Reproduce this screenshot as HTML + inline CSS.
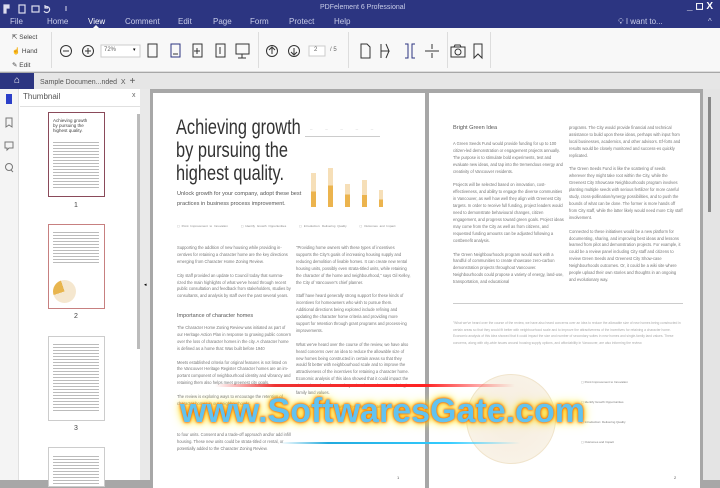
<!DOCTYPE html>
<html><head><meta charset="utf-8"><style>
*{margin:0;padding:0;box-sizing:border-box}
body{width:720px;height:480px;overflow:hidden;font-family:"Liberation Sans",sans-serif;background:#a7a7a7;position:relative}
.a{position:absolute}
.hdr{left:0;top:0;width:720px;height:28px;background:#2c3581;color:#c9cde8}
.menu span{position:absolute;top:17px;font-size:8px}
.tb{left:0;top:28px;width:720px;height:44px;background:#f8f8f8;border-bottom:1px solid #ddd}
.sep{position:absolute;top:4px;width:1px;height:36px;background:#ddd}
.p{font-size:4.1px;line-height:6.9px;color:#777;position:absolute}
</style></head><body>
<div class="a hdr">
 <svg class="a" style="left:2px;top:3px" width="80" height="12" viewBox="0 0 80 12" fill="none" stroke="#dde" stroke-width="1.2">
  <path d="M2 2h5v3H4v5H2z" fill="#dde"/><rect x="17" y="2" width="6" height="8"/><rect x="30" y="3" width="7" height="6"/><path d="M43 4a3 3 0 1 1-1 4M43 2v3h3"/><path d="M64 3v5" stroke-width="1"/>
 </svg>
 <div class="a" style="left:320px;top:4px;font-size:7px;color:#c9cde8">PDFelement 6 Professional</div>
 <div class="a" style="left:687px;top:1px;font-size:10px;color:#fff;font-weight:bold">_ ◻ X</div>
 <div class="menu">
  <span style="left:10px">File</span><span style="left:47px">Home</span><span style="left:88px;color:#fff">View</span><span style="left:125px">Comment</span><span style="left:178px">Edit</span><span style="left:213px">Page</span><span style="left:250px">Form</span><span style="left:289px">Protect</span><span style="left:334px">Help</span>
  <span style="left:618px">💡︎ I want to...</span><span style="left:708px">^</span>
 </div>
 <div class="a" style="left:93px;top:25px;width:0;height:0;border-left:3px solid transparent;border-right:3px solid transparent;border-bottom:3px solid #f8f8f8"></div>
</div>
<div class="a tb">
 <div class="a" style="left:12px;top:3px;font-size:6.5px;color:#444;line-height:14px">
  <div>⇱ Select</div><div><span style="color:#2c3581">☝</span> Hand</div><div>✎ Edit</div></div>
 <div class="sep" style="left:51px"></div>
 <svg class="a" style="left:55px;top:12px" width="440" height="20" viewBox="55 12 440 20" fill="none" stroke="#333" stroke-width="1">
  <circle cx="66" cy="23" r="5.5"/><path d="M63 23h6"/>
  <circle cx="88" cy="23" r="5.5"/><path d="M85 23h6M88 20v6"/>
  <rect x="101" y="17" width="39" height="12" fill="#fff" stroke="#ccc"/>
  <rect x="148" y="16" width="9" height="13"/><rect x="171" y="16" width="9" height="13" stroke="#2c3581"/><rect x="193" y="16" width="9" height="13"/><rect x="216" y="16" width="9" height="13"/>
  <path d="M173 26h5M197 20v6M194 23h6M220 19v7"/>
  <rect x="236" y="16" width="13" height="10"/><path d="M242 26v4M238 30h8"/>
  <circle cx="272" cy="23" r="5.5"/><path d="M272 26v-6M269 22l3-3 3 3"/>
  <circle cx="294" cy="23" r="5.5"/><path d="M294 20v6M291 24l3 3 3-3"/>
  <rect x="309" y="18" width="16" height="10" fill="#fff" stroke="#ccc"/>
  <path d="M361 16h6l3 3v11h-9z"/><path d="M381 16v14M381 23h8l-3-7M386 30l3-7" />
  <path d="M405 16h3v14h-3M415 16h-3v14h3" stroke="#2c3581"/><path d="M425 23h14M432 16v5M432 25v5"/>
  <rect x="451" y="19" width="14" height="10"/><circle cx="458" cy="24" r="3"/><path d="M454 19l1-2h5l1 2"/>
  <path d="M474 16h8v14l-4-4-4 4z"/>
 </svg>
 <div class="a" style="left:104px;top:19px;font-size:6px;color:#666">72%</div><div class="a" style="left:133px;top:19px;font-size:5px">▾</div>
 <div class="a" style="left:314px;top:19px;font-size:6px;color:#666">2</div><div class="a" style="left:330px;top:19px;font-size:6px;color:#666">/ 5</div>
 <div class="sep" style="left:258px"></div><div class="sep" style="left:348px"></div><div class="sep" style="left:447px"></div><div class="sep" style="left:490px"></div>
</div>
<div class="a" style="left:0;top:73px;width:720px;height:16px;background:#e6e6e6"></div>
<div class="a" style="left:0;top:73px;width:34px;height:16px;background:#2c3581;color:#fff;font-size:10px;text-align:center;line-height:15px">⌂</div>
<div class="a" style="left:40px;top:76px;font-size:7px;color:#555">Sample Documen...nded&nbsp;&nbsp;X&nbsp;&nbsp;<span style="font-size:10px">+</span></div>
<div class="a" style="left:0;top:89px;width:150px;height:391px;background:#fff"></div>
<div class="a" style="left:0;top:89px;width:19px;height:391px;background:#f4f4f4;border-right:1px solid #e0e0e0"></div>
<div class="a" style="left:6px;top:94px;width:6px;height:10px;background:#2c3fc8"></div>
<svg class="a" style="left:3px;top:116px" width="12" height="60" fill="none" stroke="#777"><path d="M3 2h6v9l-3-2-3 2z"/><path d="M2 26h8v6H6l-2 2v-2H2z"/><circle cx="6" cy="51" r="3.5"/><path d="M8 54l2 2"/></svg>
<div class="a" style="left:23px;top:92px;font-size:8px;color:#555">Thumbnail</div>
<div class="a" style="left:132px;top:92px;font-size:7px;color:#666">x</div>
<div class="a" style="left:20px;top:106px;width:120px;height:1px;background:#e0e0e0"></div>
<div class="a" style="left:137px;top:114px;width:3px;height:235px;background:#bbb"></div>
<div class="a" style="left:140px;top:89px;width:10px;height:391px;background:#e9e9e9"></div>
<div class="a" style="left:144px;top:282px;font-size:5px">◂</div>
<div class="a" style="left:48px;top:112px;width:57px;height:85px;background:#fff;border:1px solid #8a4a5a"></div>
<div class="a" style="left:53px;top:118px;font-size:4.5px;line-height:5px;color:#444">Achieving growth<br>by pursuing the<br>highest quality.</div>
<div class="a" style="left:53px;top:140px;width:46px;height:50px;background:repeating-linear-gradient(#fff 0 2px,#bbb 2px 3px)"></div>
<div class="a" style="left:74px;top:202px;font-size:7px;color:#444">1</div>
<div class="a" style="left:48px;top:224px;width:57px;height:85px;background:#fff;border:1px solid #c78080"></div>
<div class="a" style="left:53px;top:230px;width:46px;height:35px;background:repeating-linear-gradient(#fff 0 2px,#bbb 2px 3px)"></div>
<div class="a" style="left:53px;top:280px;width:23px;height:23px;border-radius:50%;background:conic-gradient(#f5e7cf 0 70%,#e8b54e 70% 95%,#f5e7cf 95%)"></div>
<div class="a" style="left:74px;top:313px;font-size:7px;color:#444">2</div>
<div class="a" style="left:48px;top:336px;width:57px;height:85px;background:#fff;border:1px solid #ccc"></div>
<div class="a" style="left:53px;top:342px;width:46px;height:70px;background:repeating-linear-gradient(#fff 0 2px,#bbb 2px 3px)"></div>
<div class="a" style="left:74px;top:425px;font-size:7px;color:#444">3</div>
<div class="a" style="left:48px;top:447px;width:57px;height:40px;background:#fff;border:1px solid #ccc"></div>
<div class="a" style="left:53px;top:454px;width:46px;height:30px;background:repeating-linear-gradient(#fff 0 2px,#bbb 2px 3px)"></div>
<!-- pages -->
<div class="a" style="left:153px;top:93px;width:272px;height:395px;background:#fff"></div>
<div class="a" style="left:429px;top:93px;width:271px;height:395px;background:#fff"></div>
<div class="a" style="left:703px;top:89px;width:17px;height:391px;background:#e4e4e4"></div>
<div class="a" style="left:708px;top:97px;width:3px;height:115px;background:#888"></div>
<div class="a" style="left:176px;top:116px;font-size:21px;line-height:23px;color:#333;transform:scaleX(0.78);transform-origin:0 0;white-space:nowrap">Achieving growth<br>by pursuing the<br>highest quality.</div>
<div class="a" style="left:177px;top:189px;font-size:5.6px;line-height:10px;color:#555">Unlock growth for your company, adopt these best<br>practices in business process improvement.</div>
<div class="a" style="left:305px;top:136px;width:75px;height:1px;background:#ccc"></div>
<div class="a" style="left:310px;top:128px;width:78px;font-size:2.5px;color:#aaa;word-spacing:12px">— — — — —</div>
<div class="a" style="left:311px;top:173px;width:5px;height:34px;background:linear-gradient(#f6dfb8 55%,#ecb44e 55%)"></div>
<div class="a" style="left:328px;top:168px;width:5px;height:39px;background:linear-gradient(#f6dfb8 45%,#ecb44e 45%)"></div>
<div class="a" style="left:345px;top:184px;width:5px;height:23px;background:linear-gradient(#f6dfb8 45%,#ecb44e 45%)"></div>
<div class="a" style="left:362px;top:180px;width:5px;height:27px;background:linear-gradient(#f6dfb8 55%,#ecb44e 55%)"></div>
<div class="a" style="left:379px;top:190px;width:4px;height:17px;background:linear-gradient(#f6dfb8 55%,#ecb44e 55%)"></div>
<div class="a" style="left:177px;top:224px;font-size:3px;color:#888;word-spacing:1px">▢ Point Improvement to Innovation &nbsp;&nbsp;&nbsp;&nbsp;&nbsp; ▢ Identify Growth Opportunities &nbsp;&nbsp;&nbsp;&nbsp;&nbsp; ▢ Introduction: Delivering Quality &nbsp;&nbsp;&nbsp;&nbsp;&nbsp; ▢ Outcomes and Impact</div>
<div class="p" style="left:177px;top:245px;width:115px">Supporting the addition of new housing while providing in-centives for retaining a character home are the key directions emerging from Character Home Zoning Review.<br><br>City staff provided an update to Council today that summa-rized the main highlights of what we've heard through recent public consultation and feedback from stakeholders, studies by consultants, and analysis by staff over the past several years.</div>
<div class="a" style="left:177px;top:313px;font-size:5.5px;color:#555">Importance of character homes</div>
<div class="p" style="left:177px;top:325px;width:115px">The Character Home Zoning Review was initiated as part of our Heritage Action Plan in response to growing public concern over the loss of character homes in the city. A character home is defined as a home that: Was built before 1940<br><br>Meets established criteria for original features is not listed on the Vancouver Heritage Register Character homes are an im-portant component of neighbourhood identity and vibrancy and retaining them also helps meet greenest city goals.<br><br>The review is exploring ways to encourage the retention of character homes in our neighbourhoods.</div>
<div class="p" style="left:296px;top:245px;width:115px">"Providing home owners with these types of incentives supports the City's goals of increasing housing supply and reducing demolition of livable homes. It can create new rental housing units, possibly even strata-titled units, while retaining the character of the home and neighbourhood," says Gil Kelley, the City of Vancouver's chief planner.<br><br>Staff have heard generally strong support for these kinds of incentives for homeowners who wish to pursue them. Additional directions being explored include refining and updating the character home criteria and providing more support for retention through grant programs and process-ing improvements.<br><br>What we've heard over the course of the review, we have also heard concerns over an idea to reduce the allowable size of new homes being constructed in certain areas so that they would fit better with neighbourhood scale and to improve the attractiveness of the incentives for retaining a character home. Economic analysis of this idea showed that it could impact the size and number of secondary suites in new homes and single-family land values.<br><br>These concerns, along with city-wide issues around hous-</div>
<div class="p" style="left:177px;top:432px;width:115px">to four units. Consent and a trade-off approach and/or add infill housing. These new units could be strata-titled or rental, or potentially added to the Character Zoning Review.</div>
<div class="a" style="left:397px;top:475px;font-size:4px;color:#555">1</div>
<div class="a" style="left:453px;top:125px;font-size:5.6px;color:#555">Bright Green Idea</div>
<div class="p" style="left:453px;top:141px;width:112px">A Green Seeds Fund would provide funding for up to 100 citizen-led demonstration or engagement projects annually. The purpose is to stimulate bold experiments, test and evaluate new ideas, and tap into the tremendous energy and creativity of Vancouver residents.<br><br>Projects will be selected based on innovation, cost-effectiveness, and ability to engage the diverse communities in Vancouver, as well how well they align with Greenest City targets. In order to receive full funding, project leaders would need to demonstrate behavioural changes, citizen engagement, and progress toward green goals. Project ideas may come from the City as well as from citizens, and requested funding amounts can be adjusted following a costbenefit analysis.<br><br>The Green Neighbourhoods program would work with a handful of communities to create showcase zero-carbon demonstration projects throughout Vancouver. Neighbourhoods could propose a variety of energy, land-use, transportation, and educational</div>
<div class="p" style="left:569px;top:125px;width:114px">programs. The City would provide financial and technical assistance to build upon these ideas, perhaps with input from local businesses, academics, and other advisors. Ef-forts and results would be closely monitored and success-es quickly replicated.<br><br>The Green Seeds Fund is like the scattering of seeds wherever they might take root within the City, while the Greenest City Showcase Neighbourhoods program involves planting multiple seeds with serious fertilizer for more careful study, cross-pollination/synergy possibilities, and to push the bounds of what can be done. The former is more hands off from City staff, while the latter likely would need more City staff involvement.<br><br>Connected to these initiatives would be a new platform for documenting, sharing, and improving best ideas and lessons learned from pilot and demonstration projects. For example, it could be a review panel including City staff and citizens to review Green Seeds and Greenest City Show-case Neighbourhoods outcomes. Or, it could be a wiki site where people upload their own stories and thoughts in an ongoing and evolutionary way.</div>
<div class="a" style="left:453px;top:303px;width:230px;height:1px;background:#ccc"></div>
<div class="p" style="left:453px;top:320px;width:230px;font-size:3.3px;line-height:6.6px;color:#aaa">"What we've heard over the course of the review, we have also heard concerns over an idea to reduce the allowable size of new homes being constructed in certain areas so that they would fit better with neighbourhood scale and to improve the attractiveness of the incentives for retaining a character home. Economic analysis of this idea showed that it could impact the size and number of secondary suites in new homes and single-family land values. These concerns, along with city-wide issues around housing supply options, and affordability in Vancouver, are also informing the review.</div>
<div class="a" style="left:466px;top:374px;width:90px;height:90px;border-radius:50%;background:radial-gradient(#f7efe2 30%,#faf4ea);border:1px solid #f0e4cc"></div>
<div class="a" style="left:581px;top:372px;font-size:3px;color:#777;line-height:20px">▢ Point Improvement to Innovation<br>▢ Identify Growth Opportunities<br>▢ Introduction: Delivering Quality<br>▢ Outcomes and Impact</div>
<div class="a" style="left:674px;top:475px;font-size:4px;color:#555">2</div>
<!-- watermark -->
<div class="a" style="left:215px;top:384px;width:300px;height:3px;background:linear-gradient(90deg,transparent,#e33 20%,#f22 70%,transparent)"></div>
<div class="a" style="left:280px;top:442px;width:240px;height:2px;background:linear-gradient(90deg,transparent,#2ad 20%,#3cf 70%,transparent)"></div>
<div class="a" style="left:180px;top:392px;font-size:34px;font-weight:bold;color:#62c3f0;white-space:nowrap;text-shadow:0 0 2px #e40,0 0 4px #f90,0 0 7px #fd0,0 0 11px #fe4">www.SoftwaresGate.com</div>
</body></html>
